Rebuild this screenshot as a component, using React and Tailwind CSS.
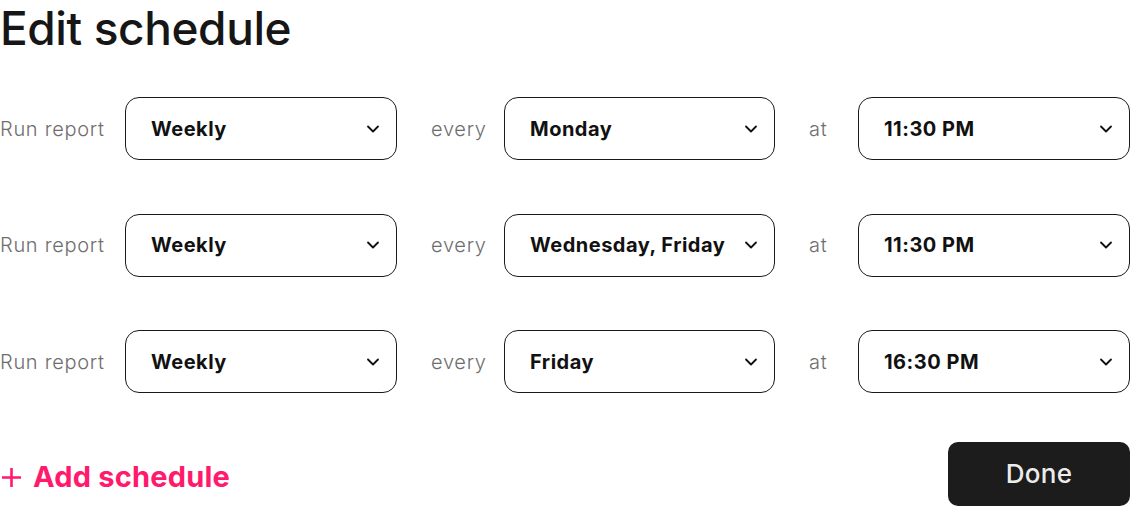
import React from 'react'
import { ChevronDown } from 'lucide-react'

const rows = [
  { freq: 'Weekly', day: 'Monday', time: '11:30 PM' },
  { freq: 'Weekly', day: 'Wednesday, Friday', time: '11:30 PM' },
  { freq: 'Weekly', day: 'Friday', time: '16:30 PM' },
]

function Select({ value, width }) {
  return (
    <button
      type="button"
      className={`flex items-center justify-between h-[63px] ${width} shrink-0 rounded-[14px] border-[1.5px] border-[#1a1a1a] bg-white pl-[25px] pr-[13px]`}
    >
      <span className="text-[20px] font-bold text-[#111] tracking-[0.5px]">{value}</span>
      <ChevronDown size={20} strokeWidth={2.2} className="text-[#111]" />
    </button>
  )
}

export default function App() {
  return (
    <div className="w-[1130px] h-[506px] bg-white overflow-hidden font-['Inter',sans-serif]">
      <h1 className="text-[46px] leading-[56px] font-medium text-[#161616] tracking-[-0.4px]">
        Edit schedule
      </h1>

      <div className="flex flex-col gap-[53.5px] mt-[41px]">
        {rows.map((r, i) => (
          <div key={i} className="flex items-center">
            <span className="w-[125px] text-[20px] text-[#6e6e6e] font-light tracking-[0.7px]">Run report</span>
            <Select value={r.freq} width="w-[272px]" />
            <span className="w-[107px] pl-[34px] text-[20px] text-[#6e6e6e] font-light tracking-[0.7px]">every</span>
            <Select value={r.day} width="w-[271px]" />
            <span className="w-[83px] pl-[34px] text-[20px] text-[#6e6e6e] font-light tracking-[0.7px]">at</span>
            <Select value={r.time} width="w-[272px]" />
          </div>
        ))}
      </div>

      <div className="flex items-center justify-between mt-[49px]">
        <button type="button" className="flex items-center gap-[12px] text-[#ff1a6c] pt-[6px] pl-[2px]">
          <svg width="19" height="19" viewBox="0 0 19 19" fill="none" stroke="currentColor" strokeWidth="2.6">
            <path d="M9.5 0v19M0 9.5h19" />
          </svg>
          <span className="text-[29px] font-bold tracking-[0.2px]">Add schedule</span>
        </button>
        <button
          type="button"
          className="w-[182px] h-[64px] rounded-[10px] bg-[#1c1c1c] text-[#ececec] text-[26px] font-medium tracking-[0.3px] pb-[2px]"
        >
          Done
        </button>
      </div>
    </div>
  )
}
